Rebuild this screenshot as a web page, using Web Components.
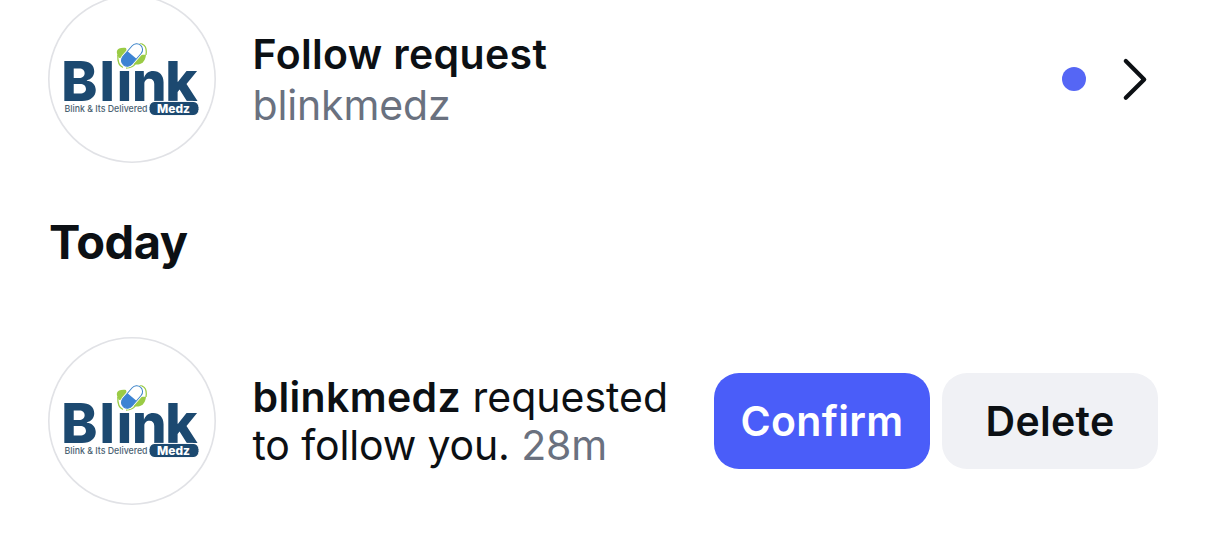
<!DOCTYPE html>
<html lang="en">
<head>
<meta charset="utf-8">
<title>Notifications</title>
<style>
  body {
    background: #ffffff;
    color: #0c1014;
    font-family: Inter, 'Liberation Sans', sans-serif;
    margin: 0;
    overflow: hidden;
  }
</style>
</head>
<body>
<ig-activity></ig-activity>

<script>
class IGAvatar extends HTMLElement {
  constructor() {
    super();

    const template = document.createElement( 'template' )
    template.innerHTML = /* template */ `
      <style>
        :host {
          display: block;
          flex: none;
          height: 168px;
          width: 168px;
        }

        svg {
          display: block;
        }

        .word {
          font: 800 54.5px Inter, sans-serif;
        }

        .tag {
          font: 500 9.3px Inter, sans-serif;
        }

        .badge {
          font: 800 12px Inter, sans-serif;
        }
      </style>
      <svg width="168" height="168" viewBox="0 0 168 168">
        <circle cx="84" cy="84" r="83.2" fill="#ffffff" stroke="#e1e2e6" stroke-width="1.6"/>
        <text class="word" x="13.3 51.5 68.7 84 117.2" y="105.5" fill="#1c4970">Blink</text>
        <!-- Capsule takes the place of the dot on the i -->
        <rect x="67.5" y="56" width="18.5" height="17" fill="#ffffff"/>
        <path d="M71 63 C67 57 68 52 78 53 C80 59 78 63 71 63 Z" fill="#9acb45"/>
        <path d="M84 69 C85 62 90 59 98 60 C97 68 92 71 84 69 Z" fill="#9acb45"/>
        <path d="M69.8 60 C69.5 67 71 71 75 72.5 M88 49.3 C95 47 99.5 51 98 60 M78 73 C83 73 86 71 88 68" fill="none" stroke="#9acb45" stroke-width="1.3"/>
        <g transform="translate(84 60) rotate(-49)">
          <rect x="-14.2" y="-7.2" width="28.4" height="14.4" rx="7.2" fill="#ffffff"/>
          <rect x="-13" y="-5.9" width="26" height="11.8" rx="5.9" fill="#ffffff" stroke="#3c83c9" stroke-width="1"/>
          <path d="M0 -5.9 V5.9 H-7.1 A5.9 5.9 0 0 1 -7.1 -5.9 Z" fill="#3c83d3"/>
        </g>
        <text class="tag" x="16.5" y="117.3" textLength="83" lengthAdjust="spacingAndGlyphs" fill="#4b6272">Blink &amp; Its Delivered</text>
        <rect x="101" y="106.4" width="50" height="14.2" rx="6" fill="#1c4970" stroke="#ffffff" stroke-width="1"/>
        <text class="badge" x="109" y="117.8" textLength="33" lengthAdjust="spacingAndGlyphs" fill="#ffffff">Medz</text>
      </svg>
    `;

    // Root
    this.attachShadow( {mode: 'open'} );
    this.shadowRoot.appendChild( template.content.cloneNode( true ) );
  }
}

window.customElements.define( 'ig-avatar', IGAvatar );

class IGButton extends HTMLElement {
  constructor() {
    super();

    const template = document.createElement( 'template' )
    template.innerHTML = /* template */ `
      <style>
        :host {
          display: block;
          flex: none;
        }

        button {
          background: #f0f1f5;
          border: none;
          border-radius: 25px;
          color: #0c1014;
          display: block;
          font: 600 41px/96px Inter, sans-serif;
          height: 96px;
          letter-spacing: 0.3px;
          padding: 0;
          width: 216px;
        }

        :host( [primary] ) button {
          background: #4a5df9;
          color: #ffffff;
        }
      </style>
      <button part="button"><slot></slot></button>
    `;

    // Root
    this.attachShadow( {mode: 'open'} );
    this.shadowRoot.appendChild( template.content.cloneNode( true ) );
  }
}

window.customElements.define( 'ig-button', IGButton );

class IGRow extends HTMLElement {
  constructor() {
    super();

    const template = document.createElement( 'template' )
    template.innerHTML = /* template */ `
      <style>
        :host {
          align-items: center;
          box-sizing: border-box;
          display: flex;
          height: 168px;
          padding: 0 48px;
        }

        .text {
          flex: 1;
          padding-left: 36.5px;
          white-space: nowrap;
        }

        .actions {
          align-items: center;
          display: flex;
          gap: 12px;
        }
      </style>
      <ig-avatar></ig-avatar>
      <div class="text"><slot></slot></div>
      <div class="actions"><slot name="actions"></slot></div>
    `;

    // Root
    this.attachShadow( {mode: 'open'} );
    this.shadowRoot.appendChild( template.content.cloneNode( true ) );
  }
}

window.customElements.define( 'ig-row', IGRow );

class IGActivity extends HTMLElement {
  constructor() {
    super();

    const template = document.createElement( 'template' )
    template.innerHTML = /* template */ `
      <style>
        :host {
          display: flex;
          flex-direction: column;
          height: 538px;
          overflow: hidden;
        }

        /* Scrolled slightly past the top edge */
        .request {
          margin-top: -5px;
        }

        p, h2 {
          margin: 0;
        }

        p {
          font-size: 41px;
          letter-spacing: -0.15px;
          line-height: 48px;
        }

        b {
          font-weight: 600;
          letter-spacing: 0.35px;
        }

        .title {
          font-weight: 600;
          letter-spacing: 0.35px;
          line-height: 50px;
          padding-bottom: 2px;
        }

        .muted {
          color: #6a717f;
        }

        .requested {
          letter-spacing: 0;
        }

        h2 {
          font-size: 47px;
          font-weight: 700;
          letter-spacing: -0.5px;
          line-height: 58px;
          padding: 50px 49px 66px;
        }

        .dot {
          background: #5566f5;
          border-radius: 50%;
          height: 24px;
          margin-right: 24px;
          width: 24px;
        }

        .chevron {
          display: block;
          margin-right: 10px;
        }
      </style>
      <ig-row class="request">
        <p class="title">Follow request</p>
        <p class="muted">blinkmedz</p>
        <div slot="actions" class="dot"></div>
        <svg slot="actions" class="chevron" width="26" height="44" viewBox="0 0 26 44">
          <path d="M3.8 4 L22.2 22.4 L3.8 40.8" fill="none" stroke="#0c1014" stroke-width="4.2" stroke-linecap="round" stroke-linejoin="round"/>
        </svg>
      </ig-row>
      <h2>Today</h2>
      <ig-row>
        <p><b>blinkmedz</b> <span class="requested">requested</span></p>
        <p>to follow you. <span class="muted">28m</span></p>
        <ig-button slot="actions" primary>Confirm</ig-button>
        <ig-button slot="actions">Delete</ig-button>
      </ig-row>
    `;

    // Root
    this.attachShadow( {mode: 'open'} );
    this.shadowRoot.appendChild( template.content.cloneNode( true ) );
  }
}

window.customElements.define( 'ig-activity', IGActivity );
</script>
</body>
</html>
